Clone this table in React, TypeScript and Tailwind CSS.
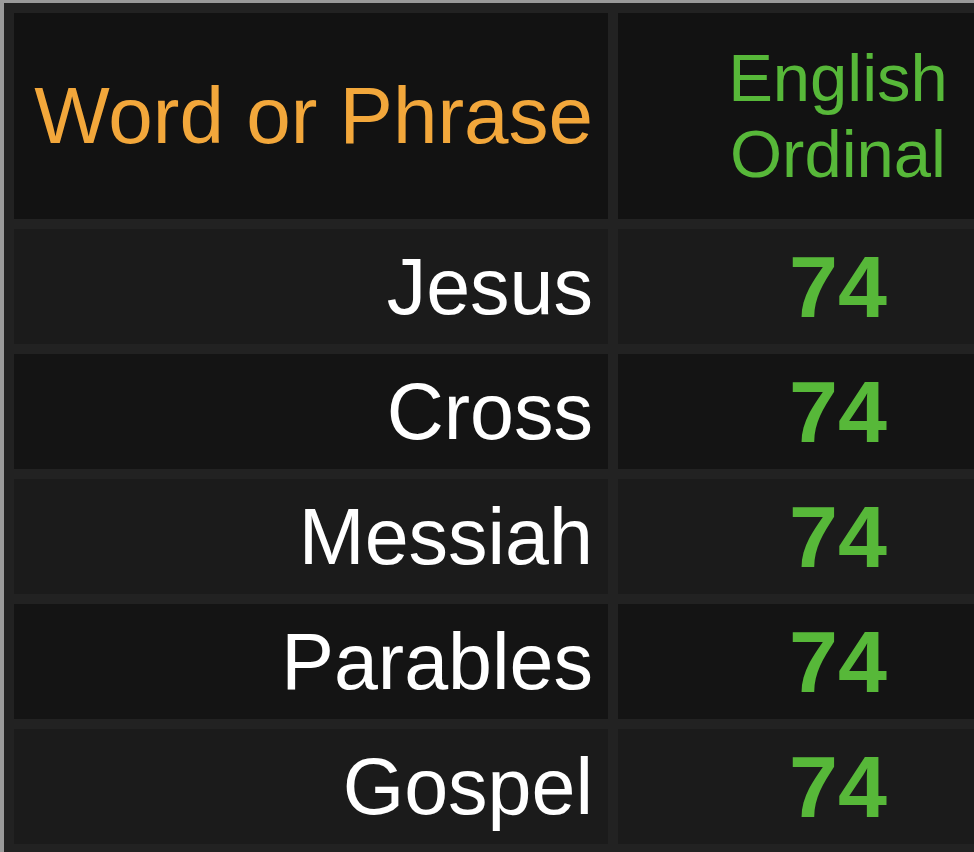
const rows = [
  { word: 'Jesus', value: 74 },
  { word: 'Cross', value: 74 },
  { word: 'Messiah', value: 74 },
  { word: 'Parables', value: 74 },
  { word: 'Gospel', value: 74 },
];

export default function App() {
  return (
    <div className="w-[974px] h-[852px] overflow-hidden bg-[#9a9a9a] pt-[3px] pl-[4px] font-['Liberation_Sans',Arial,sans-serif]">
      <div className="w-[1074px] h-[860px] bg-[#222222] p-[10px]">
        <div className="grid grid-cols-[594px_440px] grid-rows-[206px_repeat(5,115px)] gap-[10px]">
          <div className="bg-[#121212] flex items-center justify-end pr-[15px] text-[80px] leading-none text-[#f2a73b]">
            Word or Phrase
          </div>
          <div className="bg-[#121212] flex items-center justify-center text-center text-[67px] leading-[76px] text-[#57b839]">
            English
            <br />
            Ordinal
          </div>

          {rows.map((row, i) => {
            const bg = i % 2 === 0 ? 'bg-[#1b1b1b]' : 'bg-[#141414]';
            return [
              <div key={row.word} className={`${bg} flex items-center justify-end pr-[15px] text-[79px] leading-none text-white`}>
                {row.word}
              </div>,
              <div key={row.word + '-v'} className={`${bg} flex items-center justify-center text-[88px] leading-none font-bold text-[#57b839]`}>
                {row.value}
              </div>,
            ];
          })}
        </div>
      </div>
    </div>
  );
}
